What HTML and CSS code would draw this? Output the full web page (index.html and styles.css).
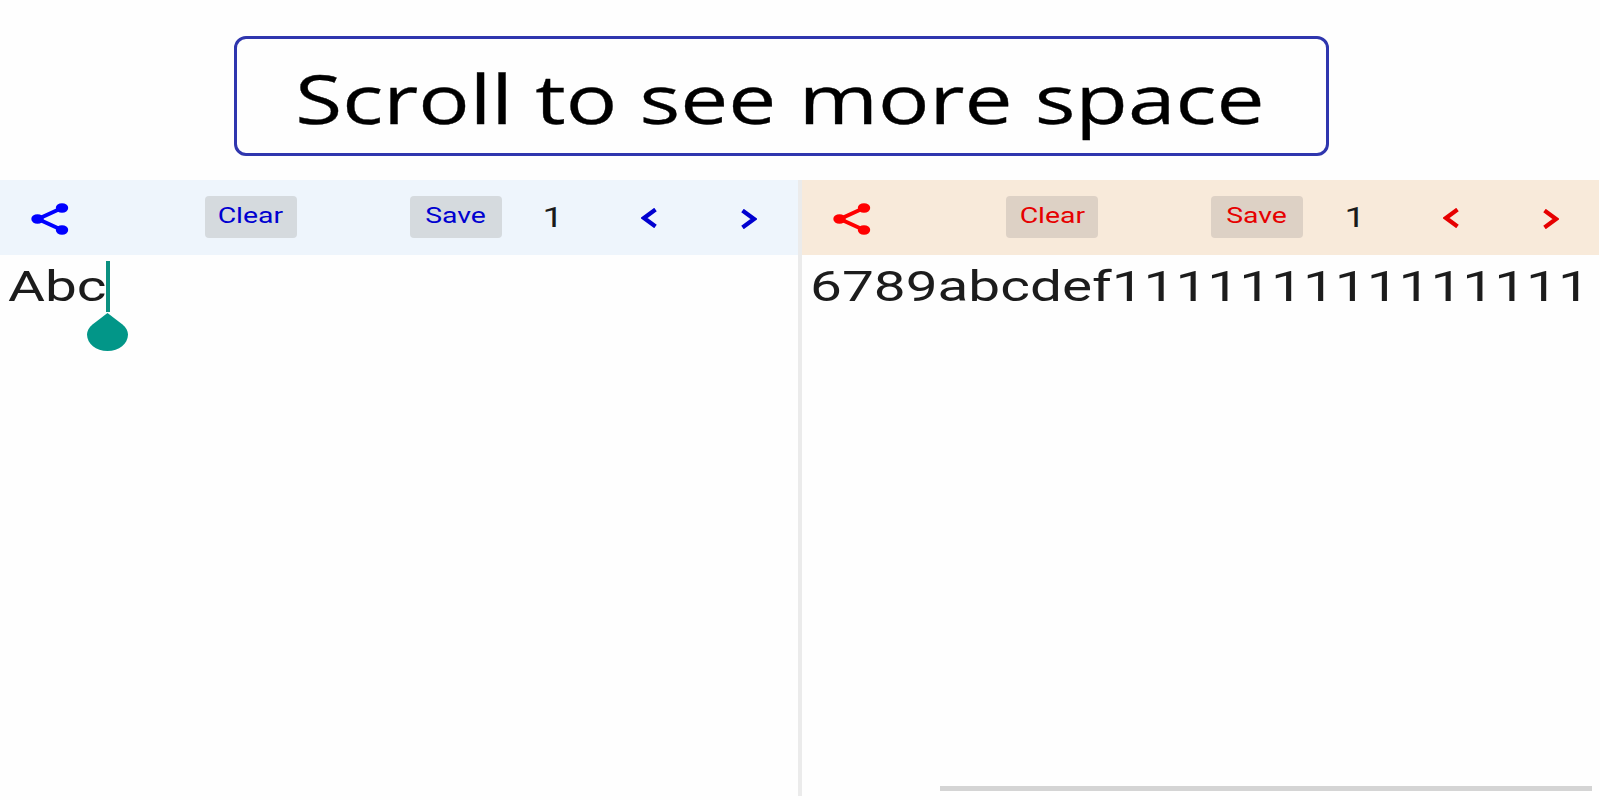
FILE: index.html
```html
<!DOCTYPE html>
<html lang="en">
<head>
    <meta charset="UTF-8">
    <meta name="viewport" content="width=device-width, initial-scale=1.0">
    <title>Notes</title>
    <link rel="stylesheet" href="styles.css">
</head>
<body>

    <header class="banner">
        <h1><span>Scroll to see more space</span></h1>
    </header>

    <main class="panes">
        <section class="pane blue">
            <div class="toolbar">
                <svg class="share" viewBox="0 0 38 32">
                    <path d="M31 5 L7 16 L31 27"/>
                    <ellipse cx="6.5" cy="16" rx="6.2" ry="4.8"/>
                    <ellipse cx="31" cy="5" rx="6.2" ry="4.8"/>
                    <ellipse cx="31" cy="27" rx="6.2" ry="4.8"/>
                </svg>
                <button class="clear"><span>Clear</span></button>
                <button class="save"><span>Save</span></button>
                <span class="page">1</span>
                <svg class="prev" viewBox="0 0 16 20"><path d="M14.5 1.5 L3 10 L14.5 18.5"/></svg>
                <svg class="next" viewBox="0 0 16 20"><path d="M1.5 1.5 L13 10 L1.5 18.5"/></svg>
            </div>
            <div class="editor">
                <span class="text">Abc</span>
                <i class="caret"></i>
                <svg class="handle" viewBox="0 0 41 38">
                    <path d="M20.5 0 L35.5 11.5 C39 14.5 41 18 41 21.5 C41 30.5 32 38 20.5 38 C9 38 0 30.5 0 21.5 C0 18 2 14.5 5.5 11.5 Z"/>
                </svg>
            </div>
        </section>
        <div class="divider"></div>
        <section class="pane red">
            <div class="toolbar">
                <svg class="share" viewBox="0 0 38 32">
                    <path d="M31 5 L7 16 L31 27"/>
                    <ellipse cx="6.5" cy="16" rx="6.2" ry="4.8"/>
                    <ellipse cx="31" cy="5" rx="6.2" ry="4.8"/>
                    <ellipse cx="31" cy="27" rx="6.2" ry="4.8"/>
                </svg>
                <button class="clear"><span>Clear</span></button>
                <button class="save"><span>Save</span></button>
                <span class="page">1</span>
                <svg class="prev" viewBox="0 0 16 20"><path d="M14.5 1.5 L3 10 L14.5 18.5"/></svg>
                <svg class="next" viewBox="0 0 16 20"><path d="M1.5 1.5 L13 10 L1.5 18.5"/></svg>
            </div>
            <div class="editor">
                <span class="text">6789abcdef111111111111111</span>
                <div class="scrollbar"></div>
            </div>
        </section>
    </main>

</body>
</html>
```
FILE: styles.css
```css
* {
    margin: 0;
    padding: 0;
    box-sizing: border-box;
}

body {
    width: 1600px;
    height: 800px;
    overflow: hidden;
    background-color: #fefefe;
    font-family: Roboto, sans-serif;
}

.banner {
    height: 180px;
    padding: 36px 0 0 234px;
}

.banner h1 {
    width: 1095px;
    height: 120px;
    padding-right: 3px;
    border: 3px solid #2f36ae;
    border-radius: 12px;
    text-align: center;
    font-family: "Open Sans", sans-serif;
    font-size: 68px;
    font-weight: 400;
    line-height: 118px;
    color: #000;
    -webkit-text-stroke: 0.3px #000;
}

.banner span {
    display: inline-block;
    transform: scaleX(1.259);
    white-space: nowrap;
}

.panes {
    display: flex;
    height: 616px;
}

.pane {
    display: flex;
    flex-direction: column;
    width: 797.5px;
}

.divider {
    width: 4px;
    background: #ebebeb;
}

.toolbar {
    display: flex;
    align-items: flex-start;
    height: 75px;
    padding-left: 31px;
}

.blue .toolbar {
    background: #eef5fc;
    color: #0000d0;
}

.red .toolbar {
    background: #f8eada;
    color: #e60000;
}

.share {
    width: 38px;
    height: 32px;
    margin-top: 22.5px;
    color: #00f;
    fill: currentColor;
}

.red .share {
    color: #f00;
}

.share path {
    fill: none;
    stroke: currentColor;
    stroke-width: 4;
}

button {
    width: 92px;
    height: 42px;
    margin-top: 16px;
    padding-bottom: 3px;
    border: none;
    border-radius: 4px;
    color: inherit;
    font-family: inherit;
    font-size: 22px;
    line-height: 38px;
}

button span {
    display: inline-block;
    transform: scaleX(1.29);
}

.blue button {
    background: #d5dade;
}

.red button {
    background: #ddd1c5;
}

.clear {
    margin-left: 135.5px;
}

.save {
    margin-left: 113px;
}

.page {
    width: 16px;
    margin: 20px 0 0 43.5px;
    font-size: 28.5px;
    line-height: 35px;
    color: #1a1a1a;
    transform: scaleX(1.3);
}

.prev,
.next {
    width: 16px;
    height: 20px;
    fill: none;
    stroke: currentColor;
    stroke-width: 4.2;
}

.prev {
    margin: 28px 0 0 80px;
}

.next {
    margin: 29px 0 0 84px;
}

.editor {
    position: relative;
    flex: 1;
    padding-left: 8px;
}

.text {
    display: inline-block;
    margin-top: 6px;
    font-size: 43px;
    line-height: 51px;
    color: #1c1c1c;
    white-space: nowrap;
    transform: scaleX(1.319);
    transform-origin: left;
}

.caret {
    position: absolute;
    left: 106px;
    top: 6px;
    width: 4px;
    height: 51px;
    background: #0b9080;
}

.handle {
    position: absolute;
    left: 87px;
    top: 58px;
    width: 41px;
    height: 38px;
    fill: #029688;
}

.scrollbar {
    position: absolute;
    left: 138.5px;
    bottom: 5px;
    width: 652px;
    height: 5px;
    background: #d4d4d4;
}
```
